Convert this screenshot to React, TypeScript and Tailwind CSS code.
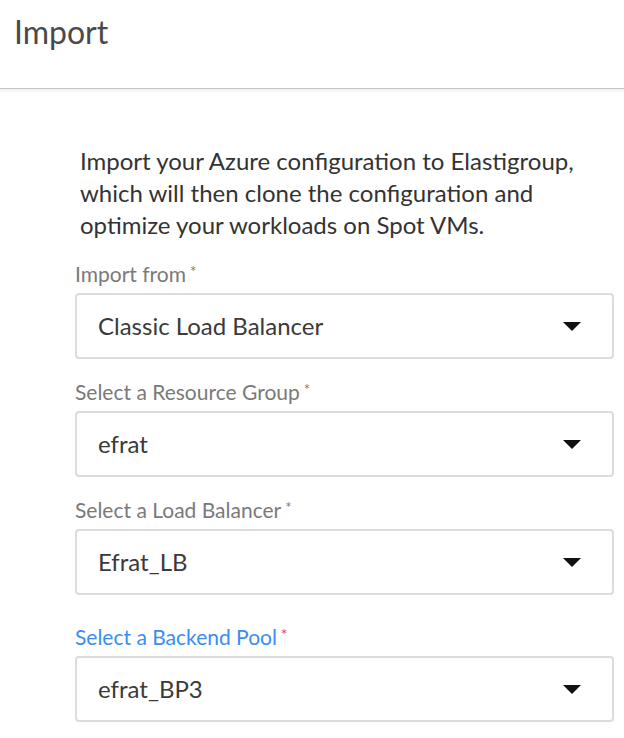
import React from 'react';

const FIELDS = [
  { label: 'Import from', value: 'Classic Load Balancer', active: false },
  { label: 'Select a Resource Group', value: 'efrat', active: false },
  { label: 'Select a Load Balancer', value: 'Efrat_LB', active: false },
  { label: 'Select a Backend Pool', value: 'efrat_BP3', active: true },
];

function Caret() {
  return (
    <svg width="18" height="9" viewBox="0 0 18 9" className="shrink-0">
      <path d="M0 0 L18 0 L9 9 Z" fill="#111" />
    </svg>
  );
}

function SelectField({ label, value, active }: { label: string; value: string; active: boolean }) {
  return (
    <div className={active ? 'mt-[30px]' : 'mt-[21px] first:mt-0'}>
      <div className={'text-[21px] leading-[24px] ' + (active ? 'text-[#3b8def]' : 'text-[#7a7a7a]')}>
        {label}
        <span className={'ml-[4px] align-top text-[15px] leading-[18px] ' + (active ? 'text-[#e2412b]' : 'text-[#7a7a7a]')}>*</span>
      </div>
      <div className="mt-[7px] flex h-[66px] items-center justify-between rounded-[4px] border-2 border-[#dcdce0] bg-white pl-[21px] pr-[31px]">
        <span className="text-[24px] text-[#3a3a3a]">{value}</span>
        <Caret />
      </div>
    </div>
  );
}

export default function App() {
  return (
    <div className="min-h-[738px] w-[624px] bg-white font-['Lato','Open_Sans',sans-serif]">
      <header className="relative h-[89px] border-b border-[#d4d4d4] px-[14px] pt-[13px]">
        <h1 className="text-[32px] leading-[38px] text-[#4a4a4a]">Import</h1>
        <div className="pointer-events-none absolute inset-x-0 top-full h-[6px] bg-gradient-to-b from-[#00000012] to-transparent" />
      </header>

      <main className="pl-[75px] pr-[10px] pt-[56px]">
        <p className="mb-[16px] pl-[5px] text-[24px] leading-[32px] text-[#333333]">
          Import your Azure configuration to Elastigroup,
          <br />
          which will then clone the configuration and
          <br />
          optimize your workloads on Spot VMs.
        </p>
        {FIELDS.map((f) => (
          <SelectField key={f.label} {...f} />
        ))}
      </main>
    </div>
  );
}
